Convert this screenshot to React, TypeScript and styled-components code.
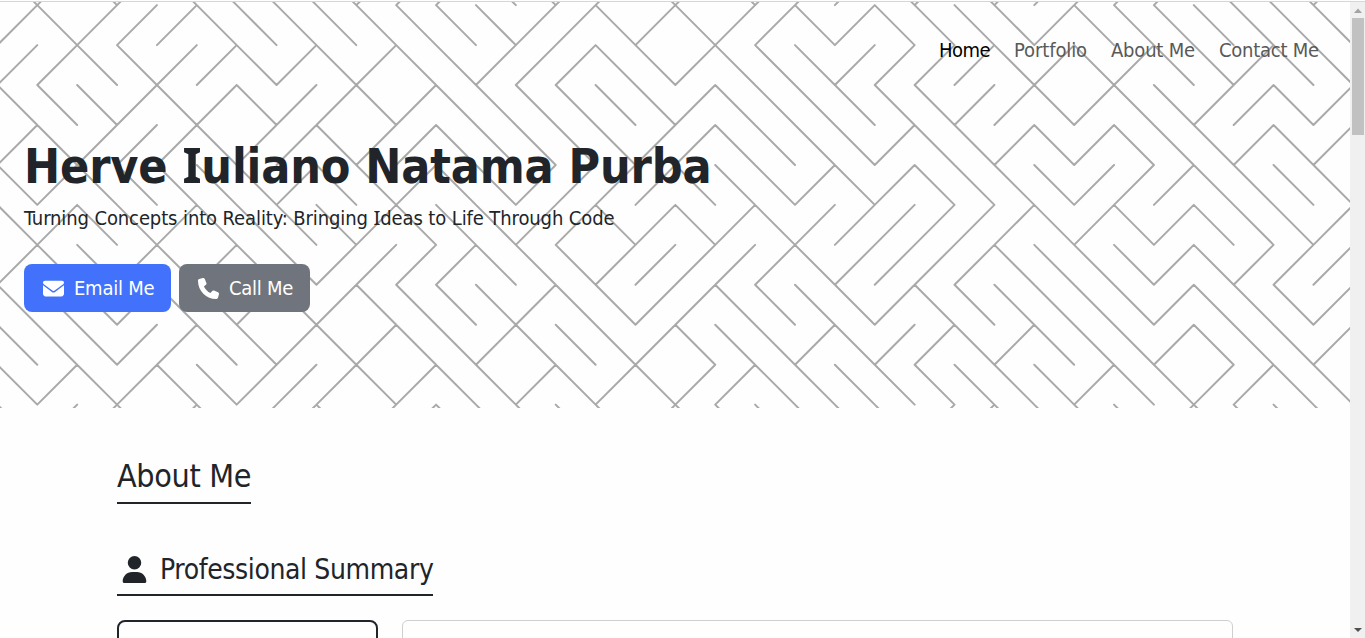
import React from "react";
import styled, { createGlobalStyle } from "styled-components";
import { FaEnvelope, FaPhone, FaUser } from "react-icons/fa6";

const GlobalStyle = createGlobalStyle`
  * { box-sizing: border-box; }
  html, body { margin: 0; padding: 0; overflow: hidden; }
  body {
    background: #fefefe;
    color: #212529;
    font-family: "DejaVu Sans Condensed", "Noto Sans", sans-serif;
    font-size: 20px;
    line-height: 30px;
  }
`;

const Screen = styled.div`
  display: flex;
  flex-direction: column;
  height: 638px;
  overflow: hidden;
`;

const TopLine = styled.div`
  flex: none;
  height: 2px;
  border-bottom: 1px solid #d6d6d6;
`;

const Viewport = styled.div`
  flex: 1;
  min-height: 0;
  display: flex;
`;

const Page = styled.div`
  flex: 1;
  min-width: 0;
  overflow: hidden;
`;

const Hero = styled.header`
  position: relative;
  height: 406px;
  padding: 33px 24px 0;
  overflow: hidden;
`;

const MazeSvg = styled.svg`
  position: absolute;
  top: 0;
  left: 0;
`;

const Nav = styled.nav`
  position: relative;
  display: flex;
  justify-content: flex-end;
  gap: 24px;
  padding-right: 8px;
`;

const NavLink = styled.a<{ $active?: boolean; $width: number; $spacing: number }>`
  width: ${(p) => p.$width}px;
  color: ${(p) => (p.$active ? "#000" : "#595959")};
  letter-spacing: ${(p) => p.$spacing}px;
  white-space: nowrap;
`;

const Intro = styled.div`
  position: relative;
  padding-top: 72px;
`;

const Name = styled.h1`
  margin: 0;
  font-size: 48px;
  line-height: 58px;
  font-weight: 700;
  letter-spacing: -0.14px;
  white-space: nowrap;
`;

const SerifCap = styled.span`
  font-family: "Noto Sans", sans-serif;
  font-size: 1.02em;
  line-height: 1;
`;

const Tagline = styled.p`
  margin: 8px 0 0;
  letter-spacing: -0.11px;
  white-space: nowrap;
`;

const Actions = styled.div`
  display: flex;
  gap: 8px;
  margin-top: 31px;
`;

const Button = styled.button<{ $color: string; $width: number }>`
  display: flex;
  align-items: center;
  gap: 8px;
  width: ${(p) => p.$width}px;
  height: 48px;
  padding: 0 0 0 17px;
  border: 0;
  border-radius: 8px;
  background: ${(p) => p.$color};
  color: #fff;
  font: inherit;
  letter-spacing: -0.25px;
  white-space: nowrap;
`;

const IconSlot = styled.span<{ $width: number; $size: number }>`
  display: inline-flex;
  flex: none;
  justify-content: center;
  width: ${(p) => p.$width}px;
  font-size: ${(p) => p.$size}px;
`;

const Content = styled.main`
  padding: 46px 117px 0;
`;

const SectionTitle = styled.h2`
  width: 134px;
  margin: 0;
  height: 50px;
  border-bottom: 2px solid #212529;
  font-size: 32px;
  line-height: 44px;
  font-weight: 400;
  letter-spacing: -0.35px;
  white-space: nowrap;
`;

const SubTitle = styled.h3`
  display: flex;
  align-items: center;
  gap: 8px;
  width: 316px;
  height: 46px;
  margin: 46px 0 24px;
  padding-bottom: 5px;
  border-bottom: 2px solid #212529;
  font-size: 28px;
  font-weight: 400;
  letter-spacing: -0.38px;
  white-space: nowrap;
`;

const Cards = styled.div`
  display: grid;
  grid-template-columns: 261px 831px;
  gap: 24px;
`;

const Card = styled.div<{ $strong?: boolean }>`
  height: 200px;
  border: ${(p) => (p.$strong ? "2px solid #212529" : "1px solid #cfcfcf")};
  border-radius: ${(p) => (p.$strong ? 8 : 6)}px;
`;

const Scrollbar = styled.div`
  flex: none;
  display: flex;
  flex-direction: column;
  align-items: center;
  width: 15px;
  padding-left: 1px;
  background: #f0f0f0;
`;

const Arrow = styled.svg`
  flex: none;
  display: block;
`;

const Thumb = styled.div`
  width: 12px;
  height: 117px;
  margin-bottom: auto;
  background: #c1c1c1;
`;

// One character per cell: 1 falls to the right, 0 rises to the right.
const MAZE = [
  "1010111110001100101000101000001110",
  "0100011111111001010010111101111111",
  "0011001010110001101110000101011011",
  "1110101001011111101111110010110010",
  "0100010010011111001111011010111010",
  "1011111011011000011101011110001111",
  "1011011110111001010100000010101110",
  "0110101100001110000010000111101000",
  "1110110101111011001111011111101110",
  "1110011010110111011101001011101110",
  "1010110001011010100111111110110011",
  "1001010010011111011111100111101111",
];

const STEP_X = 39.88;
const STEP_Y = 39.95;
const mazePath = MAZE.map((row, r) =>
  row
    .split("")
    .map((cell, c) => {
      const x0 = -2.6 + c * STEP_X;
      const x1 = x0 + STEP_X;
      const y0 = -36.8 + r * STEP_Y;
      const y1 = y0 + STEP_Y;
      return cell === "1" ? `M${x0} ${y0}L${x1} ${y1}` : `M${x1} ${y0}L${x0} ${y1}`;
    })
    .join("")
).join("");

export default function App() {
  return (
    <>
      <GlobalStyle />
      <Screen>
        <TopLine />
        <Viewport>
          <Page>
            <Hero>
              <MazeSvg width="1350" height="406" aria-hidden="true">
                <path d={mazePath} stroke="#a9a9a9" strokeWidth="2" strokeLinecap="round" fill="none" />
              </MazeSvg>
              <Nav>
                <NavLink $active $width={51} $spacing={-0.5}>Home</NavLink>
                <NavLink $width={73} $spacing={-0.1}>Portfolio</NavLink>
                <NavLink $width={84} $spacing={-0.2}>About Me</NavLink>
                <NavLink $width={99} $spacing={-0.25}>Contact Me</NavLink>
              </Nav>
              <Intro>
                <Name>Herve <SerifCap>I</SerifCap>uliano Natama Purba</Name>
                <Tagline>
                  Turning Concepts into Reality: Bringing <SerifCap>I</SerifCap>deas to Life Through Code
                </Tagline>
                <Actions>
                  <Button $color="#4272fb" $width={147}>
                    <IconSlot $width={25} $size={21}><FaEnvelope /></IconSlot>
                    Email Me
                  </Button>
                  <Button $color="#70757d" $width={131}>
                    <IconSlot $width={25} $size={21}><FaPhone /></IconSlot>
                    Call Me
                  </Button>
                </Actions>
              </Intro>
            </Hero>
            <Content>
              <SectionTitle>About Me</SectionTitle>
              <SubTitle>
                <IconSlot $width={35} $size={27}><FaUser /></IconSlot>
                Professional Summary
              </SubTitle>
              <Cards>
                <Card $strong />
                <Card />
              </Cards>
            </Content>
          </Page>
          <Scrollbar>
            <Arrow width="14" height="16" viewBox="0 0 14 16"><path d="M7 6.5L11 11H3Z" fill="#a3a3a3" /></Arrow>
            <Thumb />
            <Arrow width="14" height="16" viewBox="0 0 14 16"><path d="M7 10L11 6H3Z" fill="#505050" /></Arrow>
          </Scrollbar>
        </Viewport>
      </Screen>
    </>
  );
}
